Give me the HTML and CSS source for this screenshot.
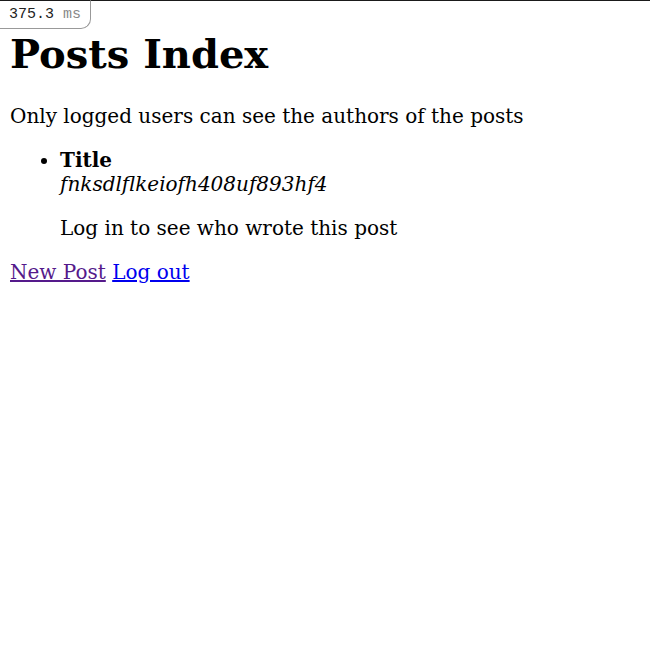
FILE: index.html
```html
<!DOCTYPE html>
<html>
<head>
<meta charset="utf-8">
<title>Posts Index</title>
<link rel="stylesheet" href="styles.css">
</head>
<body>
<div class="topline"></div>
<div class="timer"><span class="num">375.3</span> <span class="unit">ms</span></div>
<h1>Posts Index</h1>
<p>Only logged users can see the authors of the posts</p>
<ul>
  <li>
    <strong>Title</strong><br>
    <em>fnksdlflkeiofh408uf893hf4</em>
    <p>Log in to see who wrote this post</p>
  </li>
</ul>
<a href="#new" class="visited">New Post</a>
<a href="#logout">Log out</a>
</body>
</html>
```

FILE: styles.css
```css
body {
  font-family: "DejaVu Serif", serif;
  font-size: 20px;
  margin: 10px;
}
h1 {
  margin-top: 20px;
}
ul {
  padding-left: 50px;
}
.topline {
  position: fixed;
  top: 0;
  left: 0;
  right: 0;
  height: 1px;
  background: #1a1a1a;
}
.timer {
  position: fixed;
  top: 0;
  left: 0;
  padding: 5px 9px 4px 9px;
  font-family: "Liberation Mono", monospace;
  font-size: 15px;
  line-height: 18px;
  background: #fff;
  border: 1px solid #999;
  border-top: 1px solid #1a1a1a;
  border-left: none;
  border-bottom-right-radius: 10px;
}
.timer .num { color: #222; }
.timer .unit { color: #888; }
a { color: #0000ee; }
a.visited { color: #551a8b; }
```
